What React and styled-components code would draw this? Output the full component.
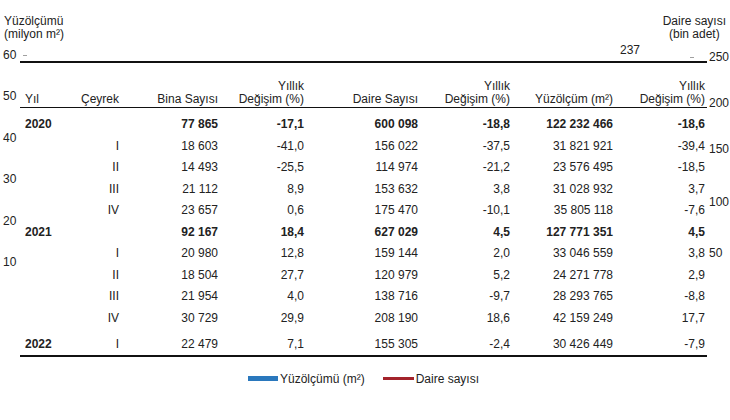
import React from 'react';
import styled, { createGlobalStyle } from 'styled-components';

const GlobalStyle = createGlobalStyle`
    html, body {
        margin: 0;
        padding: 0;
        background: #ffffff;
    }
    body {
        font-family: 'Liberation Sans', Arial, sans-serif;
    }
`;

const leftTicks = ['60', '50', '40', '30', '20', '10'];

// right axis ticks are not evenly spaced in the picture
const rightTicks = [
    { label: '250', gap: 9 },
    { label: '200', gap: 32 },
    { label: '150', gap: 32 },
    { label: '100', gap: 39 },
    { label: '50', gap: 37 },
];

const rows = [
    { year: '2020', vals: ['77 865', '-17,1', '600 098', '-18,8', '122 232 466', '-18,6'], bold: true },
    { q: 'I', vals: ['18 603', '-41,0', '156 022', '-37,5', '31 821 921', '-39,4'] },
    { q: 'II', vals: ['14 493', '-25,5', '114 974', '-21,2', '23 576 495', '-18,5'] },
    { q: 'III', vals: ['21 112', '8,9', '153 632', '3,8', '31 028 932', '3,7'] },
    { q: 'IV', vals: ['23 657', '0,6', '175 470', '-10,1', '35 805 118', '-7,6'] },
    { year: '2021', vals: ['92 167', '18,4', '627 029', '4,5', '127 771 351', '4,5'], bold: true },
    { q: 'I', vals: ['20 980', '12,8', '159 144', '2,0', '33 046 559', '3,8'] },
    { q: 'II', vals: ['18 504', '27,7', '120 979', '5,2', '24 271 778', '2,9'] },
    { q: 'III', vals: ['21 954', '4,0', '138 716', '-9,7', '28 293 765', '-8,8'] },
    { q: 'IV', vals: ['30 729', '29,9', '208 190', '18,6', '42 159 249', '17,7'] },
    { year: '2022', q: 'I', vals: ['22 479', '7,1', '155 305', '-2,4', '30 426 449', '-7,9'], spaced: true },
];

const App = () => {
    return (
        <>
            <GlobalStyle />
            <Page>
                <TitleBar>
                    <AxisTitle>
                        <div>Yüzölçümü</div>
                        <div>(milyon m²)</div>
                    </AxisTitle>
                    <AxisTitle $right>
                        <div>Daire sayısı</div>
                        <div>(bin adet)</div>
                    </AxisTitle>
                </TitleBar>

                <ChartBody>
                    <LeftAxis>
                        {leftTicks.map((t) => (
                            <Tick key={t}>{t}</Tick>
                        ))}
                    </LeftAxis>

                    <Center>
                        <TopStrip>
                            <Dash $ml={3} $mt={14} />
                            <PeakLabel>237</PeakLabel>
                            <Dash $ml={50} $mt={16} />
                        </TopStrip>

                        <Table>
                            <HeadRow>
                                <Cell $left>Yıl</Cell>
                                <Cell>Çeyrek</Cell>
                                <Cell>Bina Sayısı</Cell>
                                <Cell>Yıllık<br />Değişim (%)</Cell>
                                <Cell>Daire Sayısı</Cell>
                                <Cell>Yıllık<br />Değişim (%)</Cell>
                                <Cell>Yüzölçüm (m²)</Cell>
                                <Cell>Yıllık<br />Değişim (%)</Cell>
                            </HeadRow>
                            <Body>
                                {rows.map((r, i) => (
                                    <DataRow key={i} $bold={r.bold} $spaced={r.spaced}>
                                        <Cell $left $strong>{r.year || ''}</Cell>
                                        <Cell>{r.q || ''}</Cell>
                                        {r.vals.map((v, j) => (
                                            <Cell key={j}>{v}</Cell>
                                        ))}
                                    </DataRow>
                                ))}
                            </Body>
                        </Table>
                    </Center>

                    <RightAxis>
                        {rightTicks.map((t) => (
                            <Tick key={t.label} $mt={t.gap}>{t.label}</Tick>
                        ))}
                    </RightAxis>
                </ChartBody>

                <Legend>
                    <LegendItem>
                        <Swatch $color='#2a78bd' $w={30} $h={5} />
                        Yüzölçümü (m²)
                    </LegendItem>
                    <LegendItem>
                        <Swatch $color='#a3232b' $w={31} $h={3} />
                        Daire sayısı
                    </LegendItem>
                </Legend>
            </Page>
        </>
    );
};

export default App;

const Page = styled.div`
    width: 730px;
    height: 420px;
    overflow: hidden;
    background: #ffffff;
    color: #222222;
    font-size: 12px;
    display: flex;
    flex-direction: column;
`;

const TitleBar = styled.div`
    display: flex;
    justify-content: space-between;
    padding: 15px 4px 0 4px;
    line-height: 13px;
`;

const AxisTitle = styled.div`
    text-align: ${(p) => (p.$right ? 'center' : 'left')};
`;

const ChartBody = styled.div`
    display: grid;
    grid-template-columns: 20px 687px 23px;
`;

const LeftAxis = styled.div`
    display: flex;
    flex-direction: column;
    gap: 27.4px;
    padding: 7px 0 0 3px;
`;

const RightAxis = styled.div`
    display: flex;
    flex-direction: column;
    padding-left: 2px;
`;

const Tick = styled.div`
    height: 14px;
    line-height: 14px;
    margin-top: ${(p) => (p.$mt ? `${p.$mt}px` : '0')};
`;

const Center = styled.div`
    display: flex;
    flex-direction: column;
`;

const TopStrip = styled.div`
    height: 20px;
    display: flex;
    align-items: flex-start;
    padding-right: 13px;
`;

const Dash = styled.span`
    width: 4px;
    height: 1px;
    background: #a0a0a0;
    margin-left: ${(p) => p.$ml}px;
    margin-top: ${(p) => p.$mt}px;
`;

const PeakLabel = styled.span`
    margin-left: auto;
    margin-top: 2px;
    line-height: 14px;
`;

const Table = styled.div`
    border-top: 2px solid #111111;
    border-bottom: 2px solid #111111;
`;

const columns = '40px 60px 99px 86px 114px 92px 103px 93px';

const HeadRow = styled.div`
    display: grid;
    grid-template-columns: ${columns};
    align-items: end;
    line-height: 13px;
    padding: 17px 0 1px 0;
    border-bottom: 1px solid #111111;
`;

const Body = styled.div`
    padding-top: 5.25px;
`;

const DataRow = styled.div`
    display: grid;
    grid-template-columns: ${columns};
    align-items: center;
    height: 21.5px;
    line-height: 14px;
    margin-top: ${(p) => (p.$spaced ? '5px' : '0')};
    font-weight: ${(p) => (p.$bold ? 'bold' : 'normal')};
`;

const Cell = styled.div`
    text-align: ${(p) => (p.$left ? 'left' : 'right')};
    padding-left: ${(p) => (p.$left ? '5px' : '0')};
    padding-right: 1px;
    white-space: nowrap;
    font-weight: ${(p) => (p.$strong ? 'bold' : 'inherit')};

    &:last-child {
        padding-right: 2px;
    }
`;

const Legend = styled.div`
    display: flex;
    justify-content: center;
    gap: 18px;
    margin-top: 15px;
    padding-right: 3px;
    line-height: 14px;
`;

const LegendItem = styled.div`
    display: flex;
    align-items: center;
    gap: 2px;
`;

const Swatch = styled.span`
    display: inline-block;
    width: ${(p) => p.$w}px;
    height: ${(p) => p.$h}px;
    background: ${(p) => p.$color};
`;
